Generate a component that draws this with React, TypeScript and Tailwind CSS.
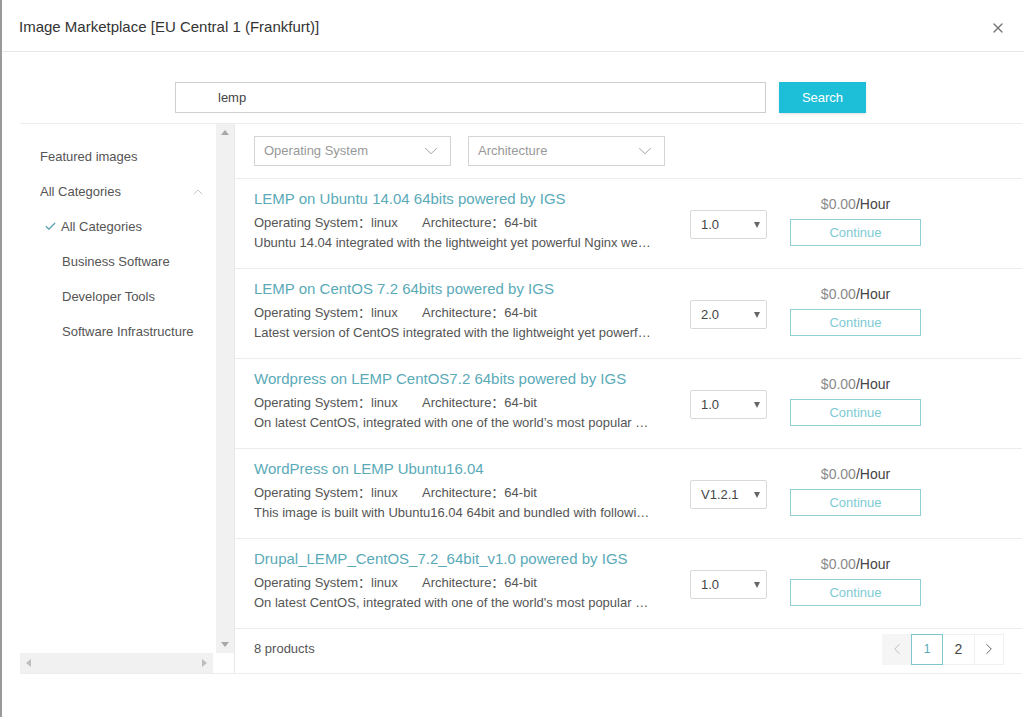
import { ChevronDown, ChevronUp, ChevronLeft, ChevronRight, Check, X } from "lucide-react"

const font = { fontFamily: '"Liberation Sans", Arial, "Noto Sans CJK SC", sans-serif' }

const products = [
    { title: "LEMP on Ubuntu 14.04 64bits powered by IGS", version: "1.0", desc: "Ubuntu 14.04 integrated with the lightweight yet powerful Nginx web server, MySQL and PHP" },
    { title: "LEMP on CentOS 7.2 64bits powered by IGS", version: "2.0", desc: "Latest version of CentOS integrated with the lightweight yet powerful Nginx" },
    { title: "Wordpress on LEMP CentOS7.2 64bits powered by IGS", version: "1.0", desc: "On latest CentOS, integrated with one of the world’s most popular open source CMS" },
    { title: "WordPress on LEMP Ubuntu16.04", version: "V1.2.1", desc: "This image is built with Ubuntu16.04 64bit and bundled with following software" },
    { title: "Drupal_LEMP_CentOS_7.2_64bit_v1.0 powered by IGS", version: "1.0", desc: "On latest CentOS, integrated with one of the world's most popular content management" },
]

const categories = ["Business Software", "Developer Tools", "Software Infrastructure"]

function App() {
    return (
        <div className="w-[1024px] h-[717px] bg-white border-l-2 border-[#9a9a9a] flex flex-col text-[#555]" style={font}>
            <div className="h-[52px] flex items-center justify-between pt-[4px] pl-[17px] pr-[18px] border-b border-[#e6e6e6] shrink-0">
                <h1 className="text-[15px] text-[#333]">Image Marketplace [EU Central 1 (Frankfurt)]</h1>
                <X size={16} strokeWidth={2} className="text-[#777]" />
            </div>

            <div className="h-[71px] flex items-start pt-[30px] pl-[173px] gap-[13px] shrink-0">
                <div className="w-[591px] h-[31px] border border-[#cfcfcf] flex items-center pl-[42px] text-[13px] text-[#444]">lemp</div>
                <button className="w-[87px] h-[31px] bg-[#1dbfd8] text-white text-[13px] shadow-sm">Search</button>
            </div>

            <div className="flex h-[551px] ml-[18px] mr-[2px] border-t border-b border-[#ececec] shrink-0">
                <div className="w-[214px] flex flex-col">
                    <div className="flex flex-1">
                        <div className="w-[196px] pt-[15px] pl-[20px] text-[13px] text-[#555]">
                            <div className="h-[35px] flex items-center">Featured images</div>
                            <div className="h-[35px] flex items-center justify-between pr-[10px]">
                                <span>All Categories</span>
                                <ChevronUp size={16} strokeWidth={1} className="text-[#aaa]" />
                            </div>
                            <div className="h-[35px] flex items-center pl-[4px] gap-[4px]">
                                <Check size={13} strokeWidth={2.2} className="text-[#5b9fb0]" />
                                <span>All Categories</span>
                            </div>
                            {categories.map((c) => (
                                <div key={c} className="h-[35px] flex items-center pl-[22px]">{c}</div>
                            ))}
                        </div>
                        <div className="w-[18px] bg-[#f1f1f1] flex flex-col items-center justify-between py-[6px]">
                            <span className="w-0 h-0 border-l-[4px] border-r-[4px] border-b-[5px] border-l-transparent border-r-transparent border-b-[#a8a8a8]" />
                            <span className="w-0 h-0 border-l-[4px] border-r-[4px] border-t-[5px] border-l-transparent border-r-transparent border-t-[#a8a8a8]" />
                        </div>
                    </div>
                    <div className="h-[20px] w-[193px] bg-[#f1f1f1] flex items-center justify-between px-[6px]">
                        <span className="w-0 h-0 border-t-[4px] border-b-[4px] border-r-[5px] border-t-transparent border-b-transparent border-r-[#bdbdbd]" />
                        <span className="w-0 h-0 border-t-[4px] border-b-[4px] border-l-[5px] border-t-transparent border-b-transparent border-l-[#bdbdbd]" />
                    </div>
                </div>

                <div className="flex-1 border-l border-[#e8e8e8] flex flex-col">
                    <div className="h-[55px] flex items-center gap-[17px] pl-[19px] border-b border-[#ececec] shrink-0">
                        {["Operating System", "Architecture"].map((f) => (
                            <div key={f} className="w-[197px] h-[30px] border border-[#d4d4d4] flex items-center justify-between pl-[9px] pr-[8px] text-[13px] text-[#999]">
                                <span>{f}</span>
                                <ChevronDown size={22} strokeWidth={1} className="text-[#999]" />
                            </div>
                        ))}
                    </div>

                    {products.map((p) => (
                        <div key={p.title} className="h-[90px] flex border-b border-[#ececec] shrink-0">
                            <div className="w-[455px] pl-[19px] pt-[11px] flex flex-col">
                                <div className="text-[15px] leading-[18px] text-[#5aaab8]">{p.title}</div>
                                <div className="mt-[7px] text-[13px] leading-[16px] text-[#555] flex">
                                    <span className="w-[168px]">Operating System：linux</span>
                                    <span>Architecture：64-bit</span>
                                </div>
                                <div className="mt-[4px] w-[400px] text-[13px] leading-[16px] text-[#555] truncate">{p.desc}</div>
                            </div>
                            <div className="w-[100px] flex items-center">
                                <div className="w-[77px] h-[29px] mt-[2px] border border-[#d9d9d9] rounded-[2px] flex items-center justify-between pl-[10px] pr-[6px] text-[13px] text-[#444]">
                                    <span>{p.version}</span>
                                    <span className="w-0 h-0 border-l-[3.5px] border-r-[3.5px] border-t-[6px] border-l-transparent border-r-transparent border-t-[#666]" />
                                </div>
                            </div>
                            <div className="w-[131px] flex flex-col items-center pt-[16px]">
                                <div className="text-[14px] leading-[18px]">
                                    <span className="text-[#8a8a8a]">$0.00</span>
                                    <span className="text-[#444]">/Hour</span>
                                </div>
                                <button className="mt-[6px] w-[131px] h-[27px] border border-[#8fcfd6] text-[13px] text-[#7dcbd4]">Continue</button>
                            </div>
                        </div>
                    ))}

                    <div className="flex-1 flex items-center justify-between pl-[19px] pr-[18px] pb-[4px]">
                        <span className="text-[13px] text-[#555]">8 products</span>
                        <div className="flex items-center h-[31px]">
                            <div className="w-[29px] h-[31px] bg-[#f5f5f5] flex items-center justify-center">
                                <ChevronLeft size={18} strokeWidth={1.2} className="text-[#bbb]" />
                            </div>
                            <div className="w-[32px] h-[31px] border border-[#7ec7cf] flex items-center justify-center text-[12px] text-[#5aaab8]">1</div>
                            <div className="w-[31px] h-[31px] border-y border-[#f0f0f0] flex items-center justify-center text-[14px] text-[#444]">2</div>
                            <div className="w-[30px] h-[31px] border border-[#f0f0f0] flex items-center justify-center">
                                <ChevronRight size={18} strokeWidth={1.2} className="text-[#555]" />
                            </div>
                        </div>
                    </div>
                </div>
            </div>
        </div>
    )
}

export default App
